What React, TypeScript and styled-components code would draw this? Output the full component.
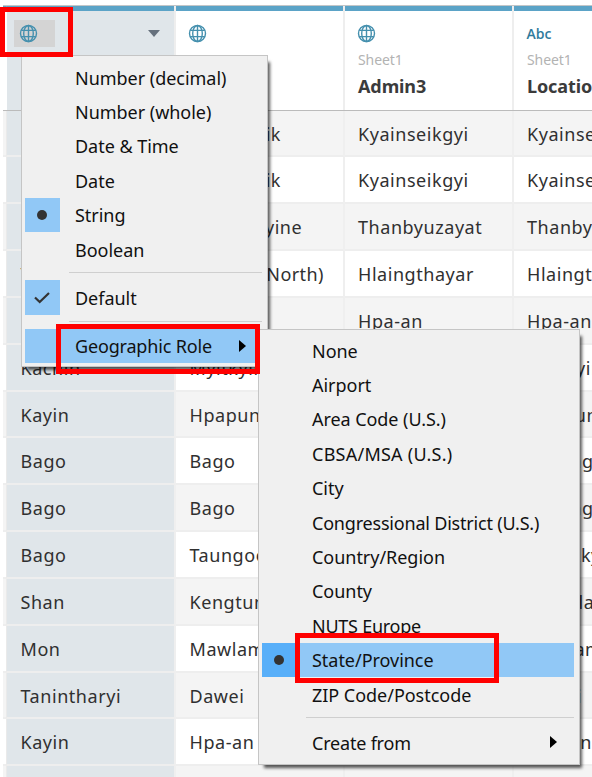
import React from "react";
import styled, { createGlobalStyle } from "styled-components";

const Global = createGlobalStyle`
  *{box-sizing:border-box}
  html,body{margin:0;padding:0;background:#fff;overflow:hidden}
`;
const Page = styled.main`
  position:relative;width:592px;height:777px;overflow:hidden;background:#fff;
  padding:5px 0 0 3px;font-family:"Noto Sans",sans-serif;
`;
const Table = styled.div`width:700px;border-top:1px solid #c3c6c8;`;
const Row = styled.div<{ $alt?: boolean }>`
  display:grid;grid-template-columns:4px 169px 168.5px 169px 169px;height:46.85px;
  background:${p => (p.$alt ? "#f4f4f4" : "#fff")};
`;
const HeadRow = styled(Row)`height:104.5px;border-bottom:1px solid #bbb;`;
const Cell = styled.div<{ $selected?: boolean; $tracking?: number }>`
  border-right:2px solid #efefef;border-bottom:2px solid #eee;padding-left:13.5px;
  background:${p => (p.$selected ? "#e0e6ea" : "transparent")};
  color:#303030;font-size:18px;line-height:47px;white-space:nowrap;overflow:hidden;
  letter-spacing:${p => p.$tracking ?? 0.55}px;
`;
const Gutter = styled.div`border-right:1px solid #eaeaea;border-bottom:2px solid #eee;`;
const HeadGutter = styled.div`border-top:5px solid #5ba3c7;border-right:1px solid #fff;`;
const HeadCell = styled.div<{ $selected?: boolean }>`
  display:flex;flex-direction:column;overflow:hidden;
  border-right:2px solid #eee;
  background:${p => (p.$selected ? "#e0e6ea" : "#fff")};
  &::before{content:"";flex:none;height:5px;background:#5ba3c7;}
`;
const TypeBar = styled.div`
  display:flex;justify-content:space-between;align-items:center;height:27px;margin:9px 14px 0 7px;
`;
const TypeChip = styled.div<{ $active?: boolean }>`
  display:flex;align-items:center;width:41px;height:27px;padding-left:5px;
  background:${p => (p.$active ? "#d4d4d4" : "transparent")};
`;
const TypeText = styled.span`
  color:#2f7b9c;font:600 14px "Open Sans",sans-serif;padding-left:1px;
`;
const Source = styled.div`
  margin:3px 0 0 13.5px;line-height:20px;font-size:14px;color:#b3b3b3;letter-spacing:-.1px;
`;
const Name = styled.div`
  margin:4px 0 0 13.5px;font:700 18px/25px "Noto Sans",sans-serif;
  color:#3b3b3b;letter-spacing:-.1px;white-space:nowrap;
`;
const Menu = styled.div`
  position:absolute;background:#f0f0f0;border:1px solid #c5c5c5;
  box-shadow:4px 5px 3px -2px rgba(0,0,0,.65);
`;
const TypeMenu = styled(Menu)`left:21px;top:55px;width:247px;height:312px;padding:4px 5px 0 3px;`;
const RoleMenu = styled(Menu)`left:258px;top:329px;width:321.5px;height:436px;padding:3px 5px 0 3px;`;
const Item = styled.div<{ $active?: boolean }>`
  display:flex;align-items:center;height:34.4px;
  background:${p => (p.$active ? "#91c8f6" : "transparent")};
`;
const Mark = styled.div<{ $tone?: string }>`
  display:flex;align-items:center;justify-content:center;width:34.5px;height:34.4px;
  flex:none;background:${p => p.$tone ?? "transparent"};
`;
const Label = styled.span<{ $tracking?: number }>`
  flex:1;margin-left:15.5px;padding-top:1px;color:#111;font-size:18px;line-height:34px;white-space:nowrap;
  letter-spacing:${p => p.$tracking ?? -0.03}px;
`;
const Separator = styled.div`
  height:14px;padding-top:6px;margin-left:43.5px;
  &::before{content:"";display:block;height:1px;background:#cfcfcf;}
`;
const Dot = styled.i`width:10px;height:10px;border-radius:50%;background:#333;`;
const Arrow = styled.i<{ $gap: number }>`
  border-left:7px solid #000;border-top:6px solid transparent;border-bottom:6px solid transparent;
  margin-right:${p => p.$gap}px;
`;
const Callout = styled.div`position:absolute;border:5px solid #f00;height:50px;`;
const TypeCallout = styled(Callout)`left:0;top:7px;width:73px;`;
const GeoCallout = styled(Callout)`left:56px;top:324px;width:204px;`;
const StateCallout = styled(Callout)`left:295px;top:633px;width:204px;`;

const Globe = () => (
  <svg width="19" height="19" viewBox="0 0 19 19" fill="none" stroke="#4590ae" strokeWidth="1.4">
    <circle cx="9.5" cy="9.5" r="8" />
    <ellipse cx="9.5" cy="9.5" rx="4.8" ry="8" />
    <path d="M9.5 1.5v16M2.3 6.4h14.4M2.3 12.6h14.4" />
  </svg>
);
const Check = () => (
  <svg width="18" height="14" viewBox="0 0 18 14" fill="none" stroke="#333" strokeWidth="2.2">
    <path d="M2 6.5 6.7 11 16 2" />
  </svg>
);
const Caret = () => (
  <svg width="12" height="7" viewBox="0 0 12 7"><path d="M0 0h12L6 7z" fill="#66717d" /></svg>
);

const rows: string[][] = [
  ["Mon", "Kawkareik", "Kyainseikgyi", "Kyainseikgyi"],
  ["Mon", "Kawkareik", "Kyainseikgyi", "Kyainseikgyi"],
  ["Mon", "Mawlamyine", "Thanbyuzayat", "Thanbyuzayat"],
  ["Yangon", "Yangon (North)", "Hlaingthayar", "Hlaingthayar"],
  ["Kayin", "Hpa-an", "Hpa-an", "Hpa-an"],
  ["Kachin", "Myitkyina", "Myitkyina", "Myitkyina"],
  ["Kayin", "Hpapun", "Hpapun", "Hpapun"],
  ["Bago", "Bago", "Bago", "Htaung"],
  ["Bago", "Bago", "Bago", "Htaung"],
  ["Bago", "Taungoo", "Kyaukkyi", "Kyaukkyi"],
  ["Shan", "Kengtung", "Mongla", "Mongla"],
  ["Mon", "Mawlamyine", "Mawlamyine", "Mawlamyine"],
  ["Tanintharyi", "Dawei", "Dawei", "Dawei"],
  ["Kayin", "Hpa-an", "Hpa-an", "Hpa-an"],
  ["", "", "", ""],
];
const basicTypes = ["Number (decimal)", "Number (whole)", "Date & Time", "Date", "String", "Boolean"];
const roles: { name: string; tracking?: number }[] = [
  { name: "None" },
  { name: "Airport" },
  { name: "Area Code (U.S.)", tracking: -0.06 },
  { name: "CBSA/MSA (U.S.)", tracking: 0.25 },
  { name: "City" },
  { name: "Congressional District (U.S.)", tracking: -0.2 },
  { name: "Country/Region" },
  { name: "County" },
  { name: "NUTS Europe", tracking: -0.25 },
  { name: "State/Province" },
  { name: "ZIP Code/Postcode" },
];

export default function App() {
  return (
    <>
      <Global />
      <Page>
        <Table>
          <HeadRow>
            <HeadGutter />
            <HeadCell $selected><TypeBar><TypeChip $active><Globe /></TypeChip><Caret /></TypeBar></HeadCell>
            <HeadCell><TypeBar><TypeChip><Globe /></TypeChip></TypeBar></HeadCell>
            <HeadCell><TypeBar><TypeChip><Globe /></TypeChip></TypeBar><Source>Sheet1</Source><Name>Admin3</Name></HeadCell>
            <HeadCell><TypeBar><TypeChip><TypeText>Abc</TypeText></TypeChip></TypeBar><Source>Sheet1</Source><Name>Location</Name></HeadCell>
          </HeadRow>
          {rows.map((r, i) => (
            <Row key={i} $alt={i % 2 === 0}>
              <Gutter />
              {r.map((t, c) => (
                <Cell key={c} $selected={c === 0} $tracking={t === "Yangon (North)" ? 0.4 : undefined}>{t}</Cell>
              ))}
            </Row>
          ))}
        </Table>
        <TypeMenu>
          {basicTypes.map(t => (
            <Item key={t}>
              <Mark $tone={t === "String" ? "#91c8f6" : undefined}>{t === "String" && <Dot />}</Mark>
              <Label>{t}</Label>
            </Item>
          ))}
          <Separator />
          <Item><Mark $tone="#91c8f6"><Check /></Mark><Label>Default</Label></Item>
          <Separator />
          <Item $active><Mark /><Label $tracking={-0.17}>Geographic Role</Label><Arrow $gap={16} /></Item>
        </TypeMenu>
        <RoleMenu>
          {roles.map(({ name, tracking }) => (
            <Item key={name} $active={name === "State/Province"}>
              <Mark $tone={name === "State/Province" ? "#58aff9" : undefined}>{name === "State/Province" && <Dot />}</Mark>
              <Label $tracking={tracking}>{name}</Label>
            </Item>
          ))}
          <Separator />
          <Item><Mark /><Label $tracking={-0.2}>Create from</Label><Arrow $gap={17} /></Item>
        </RoleMenu>
        <TypeCallout /><GeoCallout /><StateCallout />
      </Page>
    </>
  );
}
